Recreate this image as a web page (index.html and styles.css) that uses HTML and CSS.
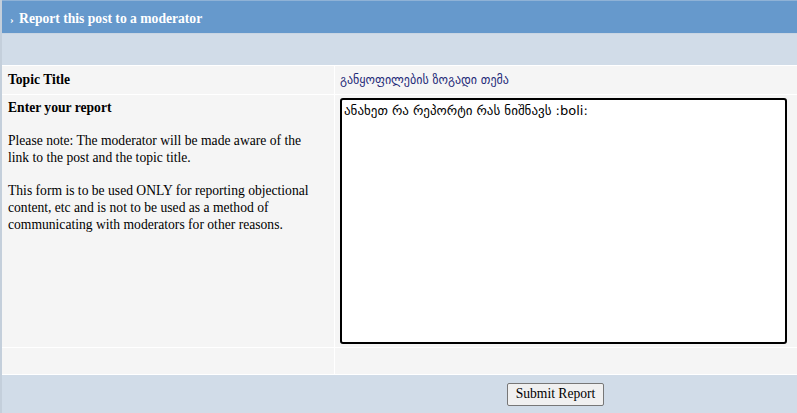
FILE: index.html
```html
<!DOCTYPE html>
<html>
<head>
<meta charset="utf-8">
<link rel="stylesheet" href="styles.css">
</head>
<body>
<div class="panel">
  <div class="head"><span class="arrow">›</span> Report this post to a moderator</div>
  <div class="sub"></div>
  <div class="row">
    <div class="cell left"><b>Topic Title</b></div>
    <div class="cell right topic">განყოფილების ზოგადი თემა</div>
  </div>
  <div class="row">
    <div class="cell left">
      <b>Enter your report</b>
      <p>Please note: The moderator will be made aware of the link to the post and the topic title.</p>
      <p>This form is to be used ONLY for reporting objectional content, etc and is not to be used as a method of communicating with moderators for other reasons.</p>
    </div>
    <div class="cell right"><textarea class="report">ანახეთ რა რეპორტი რას ნიშნავს :boli:</textarea></div>
  </div>
  <div class="row">
    <div class="cell left empty"></div>
    <div class="cell right empty"></div>
  </div>
  <div class="foot"><button class="submit">Submit Report</button></div>
</div>
</body>
</html>
```
FILE: styles.css
```css
html, body { margin: 0; padding: 0; background: #ffffff; }
body { font-family: "Liberation Serif", "DejaVu Serif", serif; font-size: 13.6px; color: #000; }
.panel { width: 797px; height: 413px; border-left: 2px solid #c4cfdb; box-sizing: border-box; overflow: hidden; }
.head {
  background: #6699cc; color: #fff; font-weight: bold; height: 34px; box-sizing: border-box;
  padding: 10px 0 0 8px; border-top: 1px solid #8fb2d6; border-bottom: 1px solid #c9d5e2;
}
.arrow { font-size: 11px; margin-right: 2px; }
.sub { background: #d1dce8; height: 31px; border-bottom: 1px solid #fff; }
.row { display: grid; grid-template-columns: 332px 1fr; column-gap: 1px; background: #fff; border-bottom: 1px solid #fff; }
.cell { background: #f5f5f5; box-sizing: border-box; }
.left { padding: 6px 6px; }
.right { padding: 6px 2px 6px 5px; }
.topic { color: #1e2a78; font-family: "DejaVu Sans", "Noto Sans", sans-serif; font-size: 12px; height: 28px; padding: 7px 2px 7px 5px; }
.left p { margin: 16px 0 0; line-height: 17px; max-width: 312px; }
.row:nth-child(4) .left { padding-top: 5px; }
.row:nth-child(4) .right { padding: 3px 8px 3px 5px; }
.report {
  display: block; width: 447px; height: 246px; box-sizing: border-box; border: 2px solid #000; border-radius: 3px;
  font-family: "DejaVu Sans", "Noto Sans", sans-serif; font-size: 13px; padding: 3px 2px; resize: none; margin: 0;
  background: #fff;
}
.empty { height: 26px; }
.foot { background: #d1dce8; height: 38px; display: flex; align-items: center; padding-left: 505px; }
.submit {
  font-family: "Liberation Serif", serif; font-size: 13.6px; background: #f0f0f0; border: 1px solid #777;
  border-radius: 2px; height: 23px; width: 97px; padding: 0; margin-top: 0;
}
```
